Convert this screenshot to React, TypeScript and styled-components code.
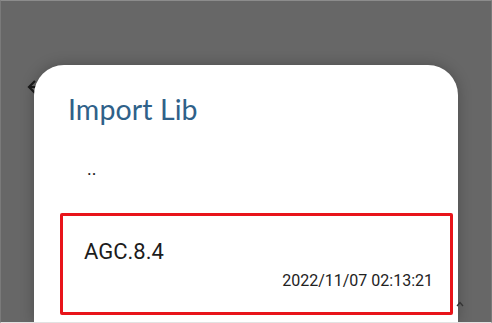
import styled, { createGlobalStyle } from "styled-components";

const Global = createGlobalStyle`
  html, body {
    margin: 0;
    padding: 0;
    background: #676767;
  }
`;

const Screen = styled.div`
  position: relative;
  box-sizing: border-box;
  width: 492px;
  height: 323px;
  overflow: hidden;
  background: #676767;
  border-top: 1px solid #8c8c8c;
  border-left: 1px solid #7a7a7a;
  border-right: 1px solid #7a7a7a;
  border-bottom: 1px solid #e2e2e2;
  padding: 64px 33px 0 33px;
  display: flex;
`;

const BackArrow = styled.svg`
  position: absolute;
  left: 25px;
  top: 78px;
  width: 16px;
  height: 16px;
`;

const Caret = styled.svg`
  position: absolute;
  left: 455px;
  top: 300px;
  width: 8px;
  height: 6px;
`;

const Dialog = styled.div`
  position: relative;
  flex: 1;
  background: #ffffff;
  border-radius: 30px 30px 0 0;
  display: flex;
  flex-direction: column;
  padding: 27px 5px 0 26px;
  box-shadow: 0 0 14px rgba(0, 0, 0, 0.25);
`;

const Title = styled.h1`
  margin: 0 0 0 8px;
  font-family: "Lato", "Open Sans", sans-serif;
  font-weight: 400;
  font-size: 28.5px;
  line-height: 34px;
  color: #2f6189;
  letter-spacing: 0.1px;
`;

const List = styled.div`
  display: flex;
  flex-direction: column;
  margin-top: 21px;
`;

const Row = styled.div<{ $selected?: boolean }>`
  display: flex;
  flex-direction: column;
  box-sizing: border-box;
  padding: ${(p) => (p.$selected ? "23px 17px 21px 21px" : "8px 20px 8px 24px")};
  border: 3px solid ${(p) => (p.$selected ? "#e8141a" : "transparent")};
  border-radius: 2px;
  margin-bottom: ${(p) => (p.$selected ? "0" : "22px")};
  font-family: "Roboto", "Liberation Sans", sans-serif;
  color: #1c1c1c;
`;

const Name = styled.div`
  font-size: 22px;
  line-height: 26px;
`;

const DotName = styled(Name)`
  font-size: 18px;
  line-height: 22px;
`;

const Stamp = styled.div`
  align-self: flex-end;
  font-size: 16px;
  line-height: 20px;
  margin-top: 6px;
  color: #222;
`;

export default function App() {
  return (
    <>
      <Global />
      <Screen>
        <BackArrow viewBox="0 0 16 16">
          <path d="M9 2 L3 8 L9 14 M3 8 H15" stroke="#1a1a1a" strokeWidth="2.2" fill="none" />
        </BackArrow>
        <Dialog>
          <Title>Import Lib</Title>
          <List>
            <Row>
              <DotName>..</DotName>
            </Row>
            <Row $selected>
              <Name>AGC.8.4</Name>
              <Stamp>2022/11/07 02:13:21</Stamp>
            </Row>
          </List>
        </Dialog>
        <Caret viewBox="0 0 8 6">
          <path d="M1 5 L4 1.5 L7 5" stroke="#333" strokeWidth="1.3" fill="none" />
        </Caret>
      </Screen>
    </>
  );
}
